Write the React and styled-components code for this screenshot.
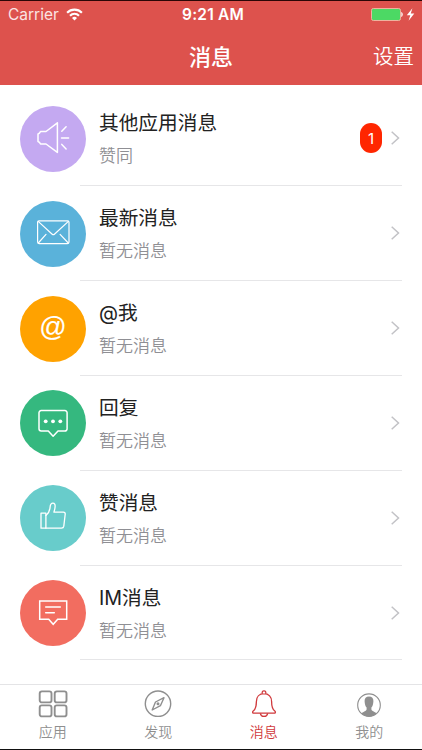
import React from 'react';
import styled, { createGlobalStyle } from 'styled-components';

const GlobalStyle = createGlobalStyle`
  * {
    box-sizing: border-box;
  }

  body {
    margin: 0;
    background-color: #ffffff;
    font-family: Inter, 'Noto Sans CJK SC', sans-serif;
  }
`;

const Screen = styled.div`
  width: 422px;
  height: 750px;
  display: flex;
  flex-direction: column;
  overflow: hidden;
  border-top: 1px solid #2a0606;
  border-bottom: 1px solid #111111;
`;

const Header = styled.header`
  height: 84px;
  flex-shrink: 0;
  background-color: #dd524d;
  color: #ffffff;
`;

const StatusBar = styled.div`
  height: 27px;
  display: grid;
  grid-template-columns: 1fr auto 1fr;
  align-items: center;
  padding: 0 6px 0 8px;
`;

const Carrier = styled.div`
  display: flex;
  align-items: center;
  gap: 7px;
  font-size: 15.5px;
  color: #fbe4e3;
`;

const Clock = styled.div`
  margin-left: 2px;
  font-size: 15.5px;
  font-weight: 600;
  letter-spacing: 0.2px;
`;

const Power = styled.div`
  display: flex;
  justify-content: flex-end;
`;

const TitleBar = styled.div`
  height: 57px;
  display: grid;
  grid-template-columns: 1fr auto 1fr;
  align-items: center;
  padding: 0 8px;
`;

const Title = styled.h1`
  grid-column: 2;
  margin: 0;
  font-size: 22px;
  line-height: 30px;
  font-weight: 500;
`;

const Settings = styled.span`
  justify-self: end;
  font-size: 20.5px;
  line-height: 30px;
  font-weight: 350;
`;

const List = styled.ul`
  flex: 1;
  margin: 0;
  padding: 6.4px 0 0;
  list-style: none;
`;

const Row = styled.li`
  height: 94.85px;
  display: flex;
  align-items: center;
  padding-left: 20px;
`;

const Avatar = styled.div`
  width: 66px;
  height: 66px;
  flex-shrink: 0;
  display: flex;
  align-items: center;
  justify-content: center;
  border-radius: 50%;
  background-color: ${({ $color }) => $color};
  color: #ffffff;
`;

const AtSign = styled.span`
  font-family: 'Liberation Sans', sans-serif;
  font-size: 27px;
  line-height: 30px;
  padding-bottom: 3px;
  -webkit-text-stroke: 0.15px currentColor;
`;

const RowBody = styled.div`
  flex: 1;
  height: 100%;
  margin-left: -6px;
  margin-right: 20px;
  padding-left: 19px;
  display: flex;
  align-items: center;
  border-bottom: 1px solid #e6e6e8;
`;

const Texts = styled.div`
  flex: 1;
  padding-top: 2px;
`;

const Name = styled.div`
  font-size: 19.7px;
  line-height: 30px;
  font-weight: 400;
  color: #222222;
`;

const Preview = styled.div`
  margin-top: 4px;
  font-size: 17px;
  line-height: 28px;
  font-weight: 350;
  color: #8f8f94;
`;

const Badge = styled.span`
  width: 22px;
  height: 30px;
  margin-right: 8px;
  display: flex;
  align-items: center;
  justify-content: center;
  border-radius: 11px;
  background-color: #ff2600;
  color: #ffffff;
  font-size: 15px;
`;

const TabBar = styled.nav`
  height: 65px;
  flex-shrink: 0;
  display: grid;
  grid-template-columns: repeat(4, 1fr);
  border-top: 1px solid #e4e4e6;
`;

const Tab = styled.div`
  display: flex;
  flex-direction: column;
  align-items: center;
  padding-top: 4px;
  color: ${({ $active }) => ($active ? '#d0393c' : '#8f8f8f')};
`;

const TabLabel = styled.span`
  margin-top: 3px;
  font-size: 14px;
  line-height: 20px;
  font-weight: 350;
`;

function AvatarIcon({ children, width = 1.5 }) {
  return (
    <svg
      width="66"
      height="66"
      viewBox="0 0 66 66"
      fill="none"
      stroke="currentColor"
      strokeWidth={width}
      strokeLinejoin="round"
      strokeLinecap="round"
    >
      {children}
    </svg>
  );
}

function TabIcon({ children }) {
  return (
    <svg width="30" height="30" viewBox="0 0 30 30" fill="none" stroke="currentColor" strokeWidth="1.4">
      {children}
    </svg>
  );
}

const messages = [
  {
    name: '其他应用消息',
    preview: '赞同',
    color: '#c4a9f1',
    count: 1,
    icon: (
      <AvatarIcon>
        <path d="M20.5 25.5H26L37.4 16.8v29.6L26 38H20.5q-.8-2-2.500-2.500v-7.500q1.700-.5 2.500-2.500z" />
        <path d="M41.8 25.2l4.3-4.5M41.5 32h7.1M41.8 38.4l4.3 4.5" />
      </AvatarIcon>
    ),
  },
  {
    name: '最新消息',
    preview: '暂无消息',
    color: '#5ab2da',
    icon: (
      <AvatarIcon width={1.2}>
        <rect x="17.6" y="19.8" width="31.4" height="22.8" rx="1.5" />
        <path d="M18.2 20.4l14 12.8q1.1 1 2.2 0l14-12.8M18.3 42l7.7-8.6M48.3 42l-8.2-8.6" />
      </AvatarIcon>
    ),
  },
  {
    name: '@我',
    preview: '暂无消息',
    color: '#ffa200',
    icon: <AtSign>@</AtSign>,
  },
  {
    name: '回复',
    preview: '暂无消息',
    color: '#35b87f',
    icon: (
      <AvatarIcon>
        <path d="M21.2 20.6h23.7a2.2 2.2 0 0 1 2.2 2.2v16a2.2 2.2 0 0 1-2.2 2.2H38l-4.9 5.2-4.8-5.2h-7.1a2.2 2.2 0 0 1-2.2-2.2v-16a2.2 2.2 0 0 1 2.2-2.2z" />
        <g fill="currentColor" stroke="none">
          <circle cx="25.7" cy="31.3" r="1.9" />
          <circle cx="33" cy="31.3" r="1.9" />
          <circle cx="40.3" cy="31.3" r="1.9" />
        </g>
      </AvatarIcon>
    ),
  },
  {
    name: '赞消息',
    preview: '暂无消息',
    color: '#68cccb',
    icon: (
      <AvatarIcon width={1.3}>
        <path d="M21 28.2h4.9v15H21z" />
        <path d="M25.9 30.4c2.6-2 3.9-4.6 4.2-8.3.2-2.6 1.2-4 2.8-4 1.7 0 2.4 1.5 2.2 3.6-.1 2-.6 3.7-1.2 5.5h9.5q2 0 1.8 2l-1.4 12q-.3 2-2.3 2H25.9" />
      </AvatarIcon>
    ),
  },
  {
    name: 'IM消息',
    preview: '暂无消息',
    color: '#f26d60',
    icon: (
      <AvatarIcon>
        <path strokeLinejoin="miter" d="M19.7 21h27v18.3h-9l-4.5 5-4.5-5h-9z" />
        <path d="M25.7 27.1h14.6M25.7 32.7h8.6" />
      </AvatarIcon>
    ),
  },
];

const tabs = [
  {
    label: '应用',
    icon: (
      <g strokeWidth="1.9">
        <rect x="1.7" y="2.4" width="11.8" height="11" rx="2.2" />
        <rect x="16.7" y="2.4" width="11.8" height="11" rx="2.2" />
        <rect x="1.7" y="16.4" width="11.8" height="11" rx="2.2" />
        <rect x="16.7" y="16.4" width="11.8" height="11" rx="2.2" />
      </g>
    ),
  },
  {
    label: '发现',
    icon: (
      <>
        <circle cx="15" cy="14.7" r="12.7" />
        <path strokeLinejoin="round" d="M21 8.7l-3.6 8-8.2 4.3 3.3-8z" />
        <circle cx="15" cy="14.8" r="0.8" />
      </>
    ),
  },
  {
    label: '消息',
    active: true,
    icon: (
      <g strokeWidth="1.3">
        <path
          strokeLinejoin="round"
          d="M15 4.7c-4.8 0-7.6 3.3-7.6 7.8 0 5.4-.7 7.7-3.2 9.6-1 .8-.6 2.1.6 2.1h20.4c1.2 0 1.6-1.3.6-2.1-2.5-1.9-3.2-4.2-3.2-9.6 0-4.5-2.8-7.8-7.6-7.8z"
        />
        <path d="M13.3 4.8c-.4-2 .2-3 1.7-3s2.1 1 1.7 3M11.3 24.3c.4 2.1 1.7 3.1 3.7 3.1s3.3-1 3.7-3.1" />
      </g>
    ),
  },
  {
    label: '我的',
    icon: (
      <>
        <circle cx="15" cy="16.2" r="11.3" strokeWidth="1.1" />
        <path
          fill="currentColor"
          stroke="none"
          d="M15 7.4c-3 0-4.500 1.800-4.400 4.600.1 2.900.8 5.300 2 6.600v1.900c-.2 1.700-3 2-5.300 3.700 2 2.100 4.600 3.300 7.700 3.300s5.700-1.200 7.700-3.300c-2.300-1.700-5.100-2-5.300-3.700v-1.900c1.200-1.300 1.900-3.700 2-6.600.1-2.800-1.400-4.600-4.400-4.600z"
        />
      </>
    ),
  },
];

function App() {
  return (
    <>
      <GlobalStyle />
      <Screen>
        <Header>
          <StatusBar>
            <Carrier>
              Carrier
              <svg width="17" height="13" viewBox="0 0 17 13" fill="none" stroke="#ffffff" strokeWidth="2.1">
                <path d="M1.1 4.7a10.5 10.5 0 0 1 14.8 0M4 7.7a6.3 6.3 0 0 1 9 0" />
                <path fill="#ffffff" stroke="none" d="M8.5 12.4L6 9.9a3.6 3.6 0 0 1 5 0z" />
              </svg>
            </Carrier>
            <Clock>9:21 AM</Clock>
            <Power>
              <svg width="46" height="15" viewBox="0 0 46 15">
                <rect x="1.5" y="1.5" width="29" height="12" rx="1.8" fill="#4cd964" stroke="#efb29f" />
                <path d="M31.6 5.3q1.9 2.2 0 4.4z" fill="#ffffff" stroke="#ffffff" strokeWidth="0.5" />
                <path d="M42.4 1.3l-5.6 7h3.5l-1.7 5.4 5.7-7.3h-3.5z" fill="#ffffff" />
              </svg>
            </Power>
          </StatusBar>
          <TitleBar>
            <Title>消息</Title>
            <Settings>设置</Settings>
          </TitleBar>
        </Header>
        <List>
          {messages.map(({ name, preview, color, count, icon }) => (
            <Row key={name}>
              <Avatar $color={color}>{icon}</Avatar>
              <RowBody>
                <Texts>
                  <Name>{name}</Name>
                  <Preview>{preview}</Preview>
                </Texts>
                {count && <Badge>{count}</Badge>}
                <svg width="12" height="16" viewBox="0 0 12 16" fill="none" stroke="#c2c2c6" strokeWidth="1.5">
                  <path d="M1.7 1.7L8.5 8l-6.8 6.3" />
                </svg>
              </RowBody>
            </Row>
          ))}
        </List>
        <TabBar>
          {tabs.map(({ label, active, icon }) => (
            <Tab key={label} $active={active}>
              <TabIcon>{icon}</TabIcon>
              <TabLabel>{label}</TabLabel>
            </Tab>
          ))}
        </TabBar>
      </Screen>
    </>
  );
}

export default App;
